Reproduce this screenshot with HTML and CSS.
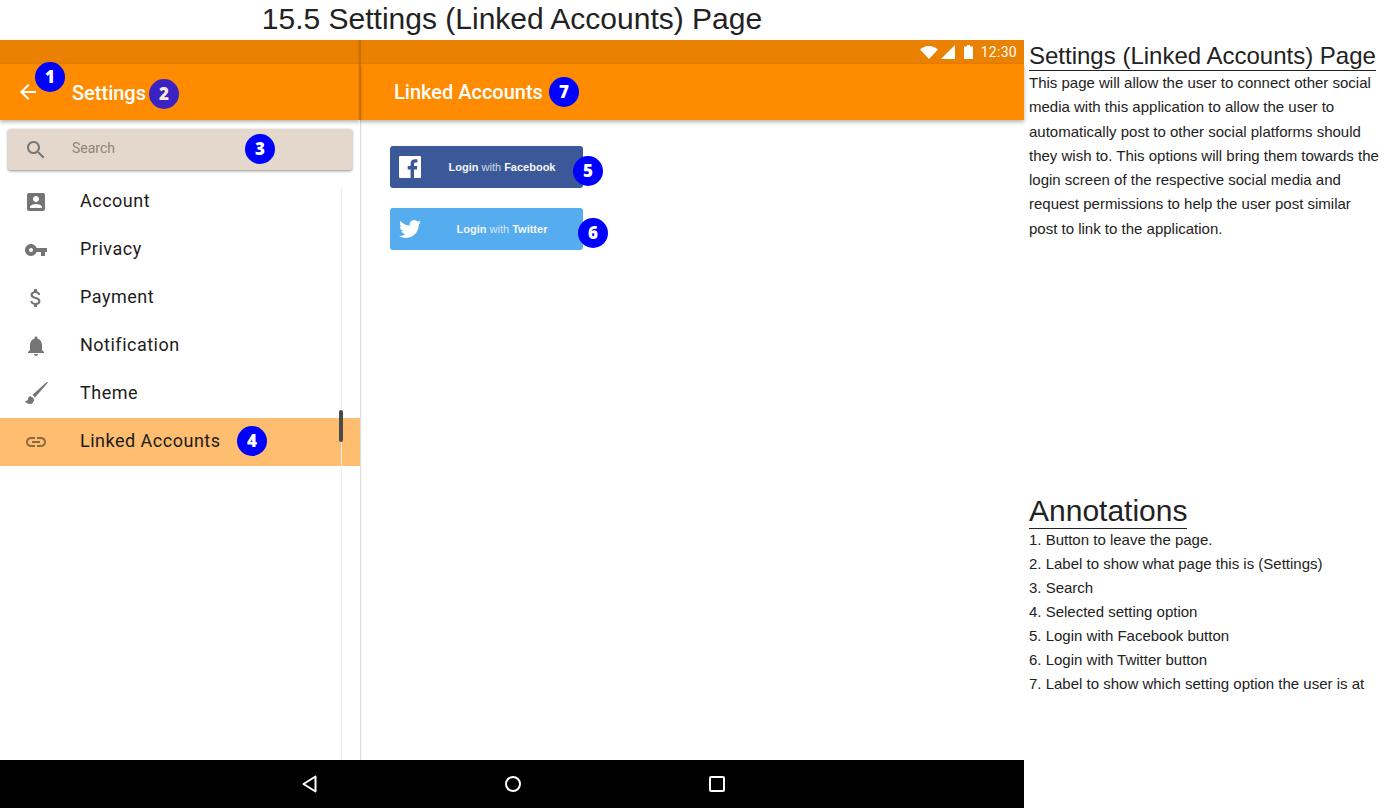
FILE: index.html
```html
<!DOCTYPE html>
<html>
<head>
    <title>15.5 Settings (Linked Accounts) Page</title>
    <link rel="stylesheet" href="styles.css">
</head>
<body>
    <div class="left">
        <h1 class="page-title">15.5 Settings (Linked Accounts) Page</h1>
        <div class="phone">
            <div class="panes">
                <div class="side">
                    <div class="status"></div>
                    <div class="toolbar">
                        <svg class="back" viewBox="0 0 24 24"><path d="M20 11H7.830l5.590-5.590L12 4l-8 8 8 8 1.410-1.410L7.830 13H20v-2z"/></svg>
                        <span class="toolbar-title">Settings</span>
                    </div>
                    <div class="search">
                        <svg class="icon" viewBox="0 0 24 24"><path d="M15.500 14h-.79l-.28-.27C15.410 12.590 16 11.110 16 9.500 16 5.910 13.090 3 9.500 3S3 5.910 3 9.500 5.910 16 9.500 16c1.610 0 3.090-.59 4.230-1.570l.27.280v.790l5 4.990L20.490 19l-4.990-5zm-6 0C7.010 14 5 11.990 5 9.500S7.010 5 9.500 5 14 7.010 14 9.500 11.990 14 9.500 14z"/></svg>
                        <span>Search</span>
                    </div>
                    <div class="menu">
                        <div class="row">
                            <svg class="icon" viewBox="0 0 24 24"><path d="M3 5v14c0 1.100.89 2 2 2h14c1.100 0 2-.9 2-2V5c0-1.100-.9-2-2-2H5c-1.110 0-2 .9-2 2zm12 4c0 1.660-1.340 3-3 3s-3-1.340-3-3 1.340-3 3-3 3 1.340 3 3zm-9 8c0-2 4-3.100 6-3.100s6 1.100 6 3.100v1H6v-1z"/></svg>
                            <span>Account</span>
                        </div>
                        <div class="row">
                            <svg class="icon" viewBox="0 0 24 24"><path d="M12.650 10C11.830 7.670 9.610 6 7 6c-3.310 0-6 2.690-6 6s2.690 6 6 6c2.610 0 4.830-1.670 5.650-4H17v4h4v-4h2v-4H12.650zM7 14c-1.100 0-2-.9-2-2s.9-2 2-2 2 .9 2 2-.9 2-2 2z"/></svg>
                            <span>Privacy</span>
                        </div>
                        <div class="row">
                            <svg class="icon" viewBox="0 0 24 24"><path d="M11.800 10.900c-2.270-.59-3-1.200-3-2.150 0-1.090 1.010-1.850 2.700-1.850 1.780 0 2.440.85 2.500 2.100h2.210c-.07-1.720-1.120-3.300-3.210-3.810V3h-3v2.160c-1.940.42-3.500 1.680-3.500 3.610 0 2.310 1.910 3.460 4.700 4.130 2.500.6 3 1.480 3 2.410 0 .69-.49 1.790-2.700 1.790-2.060 0-2.870-.92-2.980-2.100h-2.200c.12 2.190 1.760 3.420 3.680 3.830V21h3v-2.150c1.950-.37 3.500-1.500 3.500-3.550 0-2.840-2.430-3.810-4.700-4.400z"/></svg>
                            <span>Payment</span>
                        </div>
                        <div class="row">
                            <svg class="icon" viewBox="0 0 24 24"><path d="M12 22c1.100 0 2-.9 2-2h-4c0 1.100.89 2 2 2zm6-6v-5c0-3.070-1.640-5.640-4.500-6.320V4c0-.83-.67-1.500-1.500-1.500s-1.500.67-1.500 1.500v.68C7.630 5.360 6 7.920 6 11v5l-2 2v1h16v-1l-2-2z"/></svg>
                            <span>Notification</span>
                        </div>
                        <div class="row">
                            <svg class="icon" viewBox="0 0 24 24"><path d="M7 14c-1.660 0-3 1.340-3 3 0 1.310-1.160 2-3 2.500C2 21 4 22 6 22c2.210 0 4-1.790 4-4 0-1.660-1.340-3-3-3zM24 0.500L22.800 0 8.500 12.800 11 15.500z"/></svg>
                            <span>Theme</span>
                        </div>
                        <div class="row selected">
                            <svg class="icon" viewBox="0 0 24 24"><path d="M3.900 12c0-1.710 1.390-3.100 3.100-3.100h4V7H7c-2.760 0-5 2.240-5 5s2.240 5 5 5h4v-1.900H7c-1.710 0-3.100-1.390-3.100-3.100zM8 13h8v-2H8v2zm9-6h-4v1.900h4c1.710 0 3.100 1.390 3.100 3.100s-1.390 3.100-3.100 3.100h-4V17h4c2.760 0 5-2.240 5-5s-2.240-5-5-5z"/></svg>
                            <span>Linked Accounts</span>
                        </div>
                        <div class="scroll-thumb"></div>
                    </div>
                </div>
                <div class="detail">
                    <div class="status">
                        <svg class="wifi" viewBox="0 0 18 13"><path d="M0 3.500C2.500 1.300 5.600 0 9 0s6.500 1.300 9 3.500L9 13z"/></svg>
                        <svg class="signal" viewBox="0 0 14 14"><path d="M0 14L14 0v14z"/></svg>
                        <svg class="battery" viewBox="0 0 9 14"><path d="M3 0h3v1.500h3V14H0V1.500h3z"/></svg>
                        <span class="time">12:30</span>
                    </div>
                    <div class="toolbar toolbar-detail">
                        <span class="toolbar-title">Linked Accounts</span>
                    </div>
                    <div class="logins">
                        <div class="login login-fb">
                            <svg class="login-icon" viewBox="0 0 22 22"><path fill-rule="evenodd" d="M1 0h20a1 1 0 0 1 1 1v20a1 1 0 0 1-1 1h-6v-8.500h2.900l.4-3.400H15V8c0-1 .3-1.600 1.700-1.600h1.700v-3c-.3 0-1.300-.1-2.500-.1-2.500 0-4.300 1.500-4.300 4.400v2.400H8.700v3.400h2.900V22H1a1 1 0 0 1-1-1V1a1 1 0 0 1 1-1z"/></svg>
                            <span class="login-text">Login <i>with</i> Facebook</span>
                        </div>
                        <div class="login login-tw">
                            <svg class="login-icon" viewBox="0 0 24 24"><path d="M23.950 4.570a10 10 0 0 1-2.820.77 4.960 4.960 0 0 0 2.160-2.720c-.95.55-2 .96-3.120 1.190a4.920 4.920 0 0 0-8.390 4.480C7.690 8.100 4.070 6.130 1.640 3.160a4.820 4.820 0 0 0-.67 2.480c0 1.710.87 3.210 2.190 4.100a4.900 4.900 0 0 1-2.230-.61v.06c0 2.390 1.700 4.380 3.950 4.830a5 5 0 0 1-2.210.09 4.940 4.940 0 0 0 4.600 3.420A9.870 9.870 0 0 1 0 19.540a14 14 0 0 0 7.560 2.210c9.050 0 14-7.500 14-13.980 0-.21 0-.42-.02-.63a9.940 9.940 0 0 0 2.410-2.570z"/></svg>
                            <span class="login-text">Login <i>with</i> Twitter</span>
                        </div>
                    </div>
                </div>
            </div>
            <div class="navbar">
                <svg class="nav-icon" viewBox="0 0 24 24"><path d="M18.500 4.500v15L6.500 12z"/></svg>
                <svg class="nav-icon" viewBox="0 0 24 24"><circle cx="12" cy="12" r="7"/></svg>
                <svg class="nav-icon" viewBox="0 0 24 24"><rect x="5" y="5" width="14" height="14" rx="1"/></svg>
            </div>

            <span class="badge badge-1">1</span>
            <span class="badge badge-2">2</span>
            <span class="badge badge-3">3</span>
            <span class="badge badge-4">4</span>
            <span class="badge badge-5">5</span>
            <span class="badge badge-6">6</span>
            <span class="badge badge-7">7</span>
        </div>
    </div>

    <div class="notes">
        <h2 class="notes-title">Settings (Linked Accounts) Page</h2>
        <p class="notes-text">This page will allow the user to connect other social media with this application to allow the user to automatically post to other social platforms should they wish to. This options will bring them towards the login screen of the respective social media and request permissions to help the user post similar post to link to the application.</p>
        <h2 class="notes-title annotations-title">Annotations</h2>
        <ol class="annotations">
            <li>1. Button to leave the page.</li>
            <li>2. Label to show what page this is (Settings)</li>
            <li>3. Search</li>
            <li>4. Selected setting option</li>
            <li>5. Login with Facebook button</li>
            <li>6. Login with Twitter button</li>
            <li>7. Label to show which setting option the user is at</li>
        </ol>
    </div>
</body>
</html>
```

FILE: styles.css
```css
html, body {
    height: 100%;
}
body {
    margin: 0;
    display: flex;
    width: 1384px;
    height: 808px;
    overflow: hidden;
    background-color: #fff;
    font-family: "Liberation Sans", Arial, sans-serif;
    color: #222;
}
.left {
    width: 1024px;
    flex-shrink: 0;
}
.page-title {
    height: 40px;
    margin: 0;
    font-size: 30px;
    font-weight: normal;
    line-height: 38px;
    text-align: center;
}
.phone {
    position: relative;
    height: 768px;
    display: flex;
    flex-direction: column;
    font-family: Roboto, sans-serif;
}
.panes {
    flex: 1;
    display: flex;
    min-height: 0;
}
.side {
    position: relative;
    z-index: 1;
    width: 360px;
    flex-shrink: 0;
    display: flex;
    flex-direction: column;
    background-color: #fff;
    box-shadow: 1px 0 1px rgba(0, 0, 0, 0.13);
}
.detail {
    flex: 1;
    display: flex;
    flex-direction: column;
}
.status {
    height: 24px;
    flex-shrink: 0;
    background-color: #eb8100;
    display: flex;
    align-items: center;
    justify-content: flex-end;
    padding-right: 7px;
}
.side .status {
    box-shadow: inset -2px 0 2px -1px rgba(0, 0, 0, 0.2);
}
.status svg {
    fill: #fff;
    display: block;
}
.wifi {
    width: 18px;
    height: 13px;
    margin-right: 3px;
}
.signal {
    width: 14px;
    height: 14px;
    margin-right: 9px;
}
.battery {
    width: 9px;
    height: 14px;
    margin-right: 8px;
}
.time {
    color: #fff;
    font-size: 14px;
    letter-spacing: 0.300px;
}
.toolbar {
    position: relative;
    height: 56px;
    flex-shrink: 0;
    background-color: #ff8c00;
    box-shadow: 0 2px 4px rgba(0, 0, 0, 0.3);
    display: flex;
    align-items: center;
    padding-left: 16px;
}
.side .toolbar {
    box-shadow: inset -2px 0 2px -1px rgba(0, 0, 0, 0.25), 0 2px 4px rgba(0, 0, 0, 0.3);
}
.toolbar-detail {
    padding-left: 34px;
}
.toolbar-title {
    color: #fff;
    font-size: 20px;
    font-weight: 500;
}
.back {
    width: 24px;
    height: 24px;
    fill: #fff;
    margin-right: 32px;
}
.side .toolbar-title {
    padding-top: 2px;
}
.search {
    height: 41px;
    margin: 9px 8px 0;
    flex-shrink: 0;
    background-color: #e3d8cb;
    border-radius: 2px;
    box-shadow: 0 1px 3px rgba(0, 0, 0, 0.45);
    display: flex;
    align-items: center;
    padding-left: 16px;
    color: #8c857c;
    font-size: 14px;
}
.search span {
    padding-bottom: 4px;
}
.search .icon {
    margin-right: 24px;
}
.icon {
    width: 24px;
    height: 24px;
    fill: #757575;
    flex-shrink: 0;
}
.menu {
    position: relative;
    flex: 1;
    margin-top: 8px;
}
.menu::after {
    content: "";
    position: absolute;
    top: 9px;
    bottom: 0;
    right: 18px;
    width: 1px;
    background-color: #ececec;
}
.row {
    height: 48px;
    display: flex;
    align-items: center;
    padding-left: 24px;
    font-size: 18px;
    letter-spacing: 0.500px;
    color: #1c1c1c;
}
.row span {
    padding-bottom: 4px;
}
.row .icon {
    margin-right: 32px;
}
.selected {
    background-color: #ffbd6f;
}
.selected .icon {
    fill: #8a6a3f;
}
.scroll-thumb {
    position: absolute;
    z-index: 1;
    top: 232px;
    right: 17px;
    width: 4px;
    height: 32px;
    border-radius: 2px;
    background-color: #4a4a4a;
}
.logins {
    padding: 26px 0 0 30px;
    display: flex;
    flex-direction: column;
    gap: 20px;
}
.login {
    width: 193px;
    height: 42px;
    border-radius: 3px;
    display: flex;
    align-items: center;
    padding-left: 9px;
    box-sizing: border-box;
    color: #f4f6fa;
    font-family: "Liberation Sans", Arial, sans-serif;
    font-size: 11px;
    font-weight: bold;
}
.login-fb {
    background-color: #3b5998;
}
.login-tw {
    background-color: #55acee;
}
.login-icon {
    width: 22px;
    height: 22px;
    fill: #fff;
    flex-shrink: 0;
}
.login-text {
    flex: 1;
    text-align: center;
}
.login-text i {
    font-style: normal;
    font-weight: normal;
    opacity: 0.8;
}
.navbar {
    height: 48px;
    flex-shrink: 0;
    background-color: #000;
    display: flex;
    align-items: center;
    justify-content: center;
    gap: 180px;
    padding-left: 1px;
}
.nav-icon {
    width: 24px;
    height: 24px;
    fill: none;
    stroke: #fff;
    stroke-width: 2;
    stroke-linejoin: round;
}
.badge {
    position: absolute;
    z-index: 2;
    width: 30px;
    height: 30px;
    border-radius: 50%;
    background-color: #0000ff;
    color: #fff;
    font-family: "Open Sans", sans-serif;
    font-size: 17px;
    font-weight: 800;
    line-height: 30px;
    text-align: center;
}
.badge-1 { left: 35px; top: 22px; }
.badge-2 { left: 149px; top: 39px; background-color: #3a22c4; color: #fbe9d6; }
.badge-3 { left: 245px; top: 94px; }
.badge-4 { left: 237px; top: 386px; }
.badge-5 { left: 573px; top: 116px; }
.badge-6 { left: 578px; top: 178px; }
.badge-7 { left: 549px; top: 37px; }
.notes {
    flex: 1;
    padding: 0 0 0 5px;
    min-width: 0;
}
.notes-title {
    display: table;
    white-space: nowrap;
    margin: 41px 0 0;
    font-size: 24px;
    font-weight: normal;
    line-height: 29px;
    border-bottom: 1px solid #222;
}
.notes-text {
    width: 352px;
    margin: 0;
    font-size: 15px;
    line-height: 24.300px;
}
.annotations-title {
    margin-top: 253px;
    font-size: 30px;
    line-height: 34px;
}
.annotations {
    list-style: none;
    margin: -1px 0 0;
    padding: 0;
    font-size: 15px;
    line-height: 24px;
}
```
